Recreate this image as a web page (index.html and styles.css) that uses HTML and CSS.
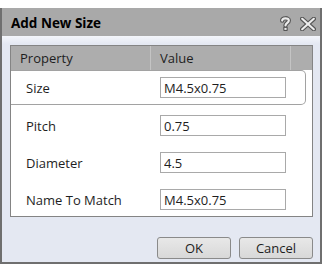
FILE: index.html
```html
<!DOCTYPE html>
<html lang="en">
<head>
    <meta charset="UTF-8">
    <title>Add New Size</title>
    <link rel="stylesheet" href="styles.css">
</head>
<body>
    <div class="dialog">
        <div class="titlebar">
            <span class="title">Add New Size</span>
            <div class="caption-buttons">
                <svg class="icon" width="11" height="15" viewBox="0 0 11 15">
                    <path d="M2.2 4.6 C2.2 1.6 8.8 1.6 8.8 4.4 C8.8 6.8 5.5 6.8 5.5 9.6" fill="none" stroke="#555" stroke-width="4.4" stroke-linecap="round"/>
                    <path d="M2.2 4.6 C2.2 1.6 8.8 1.6 8.8 4.4 C8.8 6.8 5.5 6.8 5.5 9.6" fill="none" stroke="#ececec" stroke-width="2.2" stroke-linecap="round"/>
                    <rect x="3.3" y="10.8" width="4.4" height="4.2" rx="0.8" fill="#555"/>
                    <rect x="4.4" y="11.9" width="2.2" height="2" fill="#ececec"/>
                </svg>
                <svg class="icon" width="16" height="14" viewBox="0 0 16 14">
                    <path d="M2.2 1.8 L13.8 12.2 M13.8 1.8 L2.2 12.2" stroke="#555" stroke-width="4.4" stroke-linecap="round"/>
                    <path d="M2.2 1.8 L13.8 12.2 M13.8 1.8 L2.2 12.2" stroke="#ececec" stroke-width="2.2" stroke-linecap="round"/>
                </svg>
            </div>
        </div>

        <div class="content">
            <!-- property grid -->
            <div class="grid">
                <div class="grid-head">
                    <div class="col-name">Property</div>
                    <div class="col-value">Value</div>
                    <div class="col-spare"></div>
                </div>
                <div class="row selected">
                    <div class="col-name">Size</div>
                    <div class="col-value"><input type="text" value="M4.5x0.75"></div>
                </div>
                <div class="row">
                    <div class="col-name">Pitch</div>
                    <div class="col-value"><input type="text" value="0.75"></div>
                </div>
                <div class="row">
                    <div class="col-name">Diameter</div>
                    <div class="col-value"><input type="text" value="4.5"></div>
                </div>
                <div class="row">
                    <div class="col-name">Name To Match</div>
                    <div class="col-value"><input type="text" value="M4.5x0.75"></div>
                </div>
            </div>

            <div class="buttons">
                <button type="button">OK</button>
                <button type="button">Cancel</button>
            </div>
        </div>
    </div>
</body>
</html>
```

FILE: styles.css
```css
body {
    margin: 0;
    padding: 0;
    background-color: #ffffff;
    font-family: "Open Sans", "Liberation Sans", sans-serif;
    font-size: 12px;
    color: #1e1e1e;
}
.dialog {
    margin-top: 8px;
    width: 322px;
    height: 256px;
    box-sizing: border-box;
    border: 2px solid #6f6f6f;
    border-top: none;
    display: flex;
    flex-direction: column;
}
.titlebar {
    height: 28px;
    background-color: #a9a9a9;
    display: flex;
    align-items: center;
    padding-left: 9px;
    padding-right: 4px;
}
.title {
    flex: 1;
    font-weight: bold;
    font-size: 13.5px;
    color: #000;
    padding-top: 2px;
}
.caption-buttons {
    display: flex;
    align-items: center;
    gap: 9px;
    padding-top: 3px;
}
.content {
    flex: 1;
    background: linear-gradient(#f4f6fb, #e4e8f2 8px);
    padding: 9px 7px 0 8px;
    display: flex;
    flex-direction: column;
}
.grid {
    border: 1px solid #848484;
    background-color: #fff;
    height: 172px;
    box-sizing: border-box;
}
.grid-head {
    display: flex;
    height: 24px;
    background-color: #adadad;
    align-items: stretch;
}
.grid-head > div {
    display: flex;
    align-items: center;
    font-size: 13px;
}
.col-name {
    width: 139px;
    padding-left: 9px;
    box-sizing: border-box;
}
.col-value {
    width: 140px;
    padding-left: 9px;
    box-sizing: border-box;
    border-left: 1px solid #c4c4c4;
}
.grid-head .col-spare {
    flex: 1;
    border-left: 1px solid #c4c4c4;
}
.row {
    display: flex;
    align-items: center;
    height: 37px;
    font-size: 13px;
}
.row .col-name {
    padding-left: 15px;
}
.row .col-value {
    border-left: none;
    padding-left: 10px;
}
.row.selected {
    height: 35px;
    margin-right: 6px;
    margin-bottom: 2px;
    border: 1px solid #a2a2a2;
    border-left: none;
    border-radius: 0 5px 5px 0;
    box-sizing: border-box;
}
.row input {
    width: 126px;
    height: 21px;
    box-sizing: border-box;
    border: 1px solid #a9a9a9;
    padding: 0 3px;
    font-family: "Open Sans", "Liberation Sans", sans-serif;
    font-size: 13px;
    color: #1e1e1e;
}
.buttons {
    display: flex;
    justify-content: flex-end;
    gap: 8px;
    margin-top: 20px;
}
button {
    width: 74px;
    height: 22px;
    border: 1px solid #8a8a8a;
    border-radius: 3px;
    background: linear-gradient(#e8e8e8, #d8d8d8);
    font-family: "Open Sans", "Liberation Sans", sans-serif;
    font-size: 13px;
    color: #1e1e1e;
    padding: 0;
}
```
